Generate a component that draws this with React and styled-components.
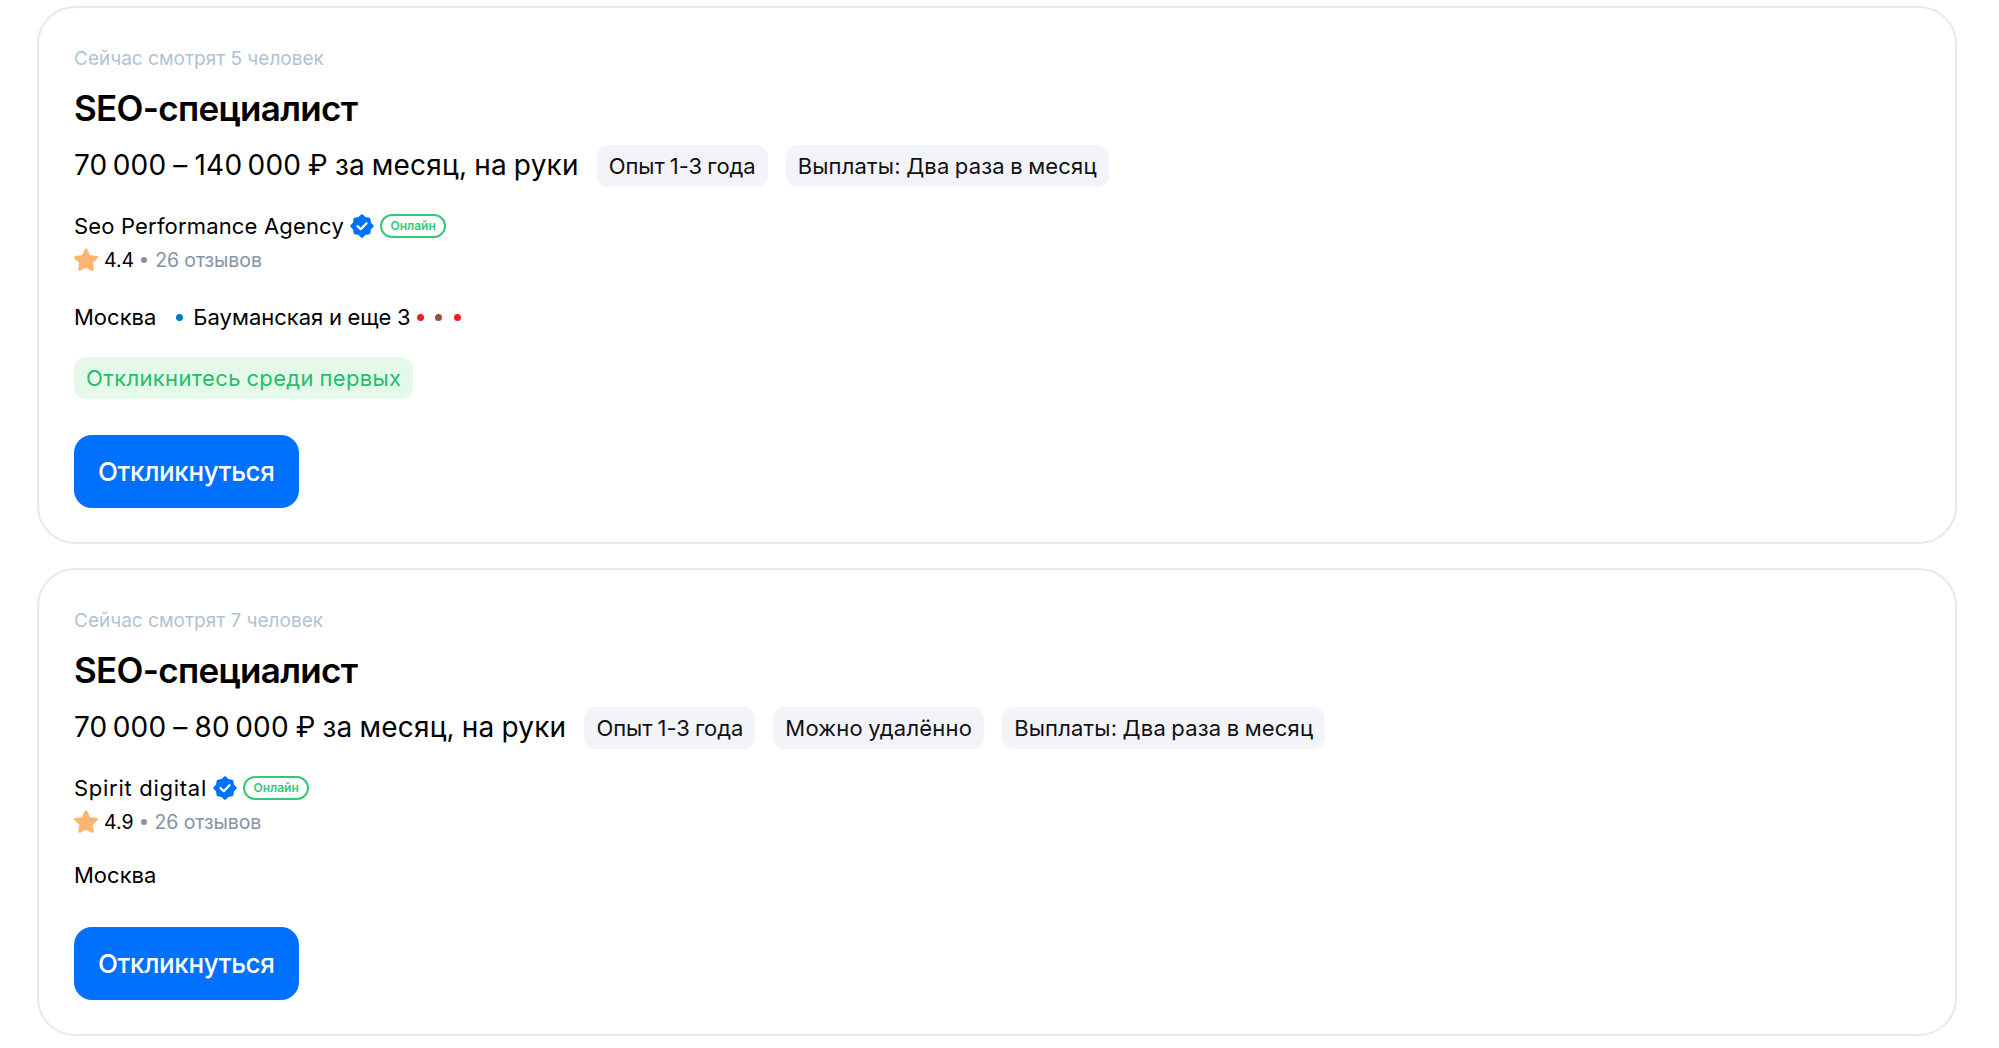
import React from 'react'
import styled, { createGlobalStyle } from 'styled-components'

const GlobalStyle = createGlobalStyle`
  * {
    box-sizing: border-box;
  }

  body {
    margin: 0;
    background: #fff;
    color: #000;
    font-family: Inter, 'Liberation Sans', sans-serif;
  }
`
const List = styled.main`
  display: flex;
  flex-direction: column;
  gap: 24px;
  padding: 6px 42px 12px 37px;
`
const Card = styled.article`
  display: flex;
  flex-direction: column;
  align-items: flex-start;
  padding: 38px 35px 34px;
  border: 2px solid #e4e9f0;
  border-radius: 38px;
`
const Viewers = styled.div`
  font-size: 19px;
  line-height: 26px;
  color: #b0c3d4;
`
const Title = styled.h2`
  margin: 13px 0 0;
  font-size: 35px;
  font-weight: 600;
  line-height: 46px;
  letter-spacing: -0.7px;
`
const SalaryRow = styled.div`
  display: flex;
  align-items: center;
  gap: 18px;
  height: 42px;
  margin-top: 14px;
`
const Salary = styled.div`
  font-size: 28px;
  line-height: 38px;
  letter-spacing: 0.2px;
  word-spacing: -1.1px;
  white-space: nowrap;
  margin-top: -3px;
`
const Chip = styled.div`
  height: 42px;
  padding: 0 12px;
  border-radius: 12px;
  background: ${({ $green }) => ($green ? '#e4f9ea' : '#f3f3fa')};
  color: ${({ $green }) => ($green ? '#22bf68' : '#111')};
  font-size: 22px;
  line-height: 42px;
  letter-spacing: ${({ $tracking }) => $tracking || 0}px;
  word-spacing: -1px;
  white-space: nowrap;
`
const CompanyRow = styled.div`
  display: flex;
  align-items: center;
  gap: 6px;
  height: 28px;
  margin-top: 25px;
`
const Company = styled.span`
  font-size: 22px;
  line-height: 28px;
  letter-spacing: ${({ $tracking }) => $tracking}px;
`
const Online = styled.span`
  height: 24px;
  padding: 0 8.5px;
  border: 2px solid #32c977;
  border-radius: 12px;
  color: #32c977;
  font-size: 12px;
  font-weight: 600;
  line-height: 20px;
`
const RatingRow = styled.div`
  display: flex;
  align-items: center;
  height: 28px;
  margin-top: 6px;
  font-size: 19.5px;
  line-height: 28px;
`
const Rating = styled.span`
  margin-left: 6px;
`
const Reviews = styled.span`
  color: #8593a5;
  letter-spacing: -0.1px;
`
const Dot = styled.i`
  width: 7px;
  height: 7px;
  border-radius: 50%;
  background: ${({ $color }) => $color};
`
const RatingDot = styled(Dot)`
  width: 6px;
  height: 6px;
  margin: 0 8px 0 7px;
`
const Location = styled.div`
  display: flex;
  align-items: center;
  height: 32px;
  margin-top: ${({ $compact }) => ($compact ? '23px' : '27px')};
  font-size: 22px;
  line-height: 32px;
`
const Metro = styled.span`
  display: flex;
  align-items: center;
  margin-left: 20px;
`
const Station = styled.span`
  margin: 0 6px 0 10px;
  word-spacing: -0.6px;
`
const Lines = styled.span`
  display: flex;
  gap: 11.5px;
`
const Hint = styled.div`
  margin-top: 24px;
`
const Button = styled.button`
  height: 73px;
  margin-top: 36px;
  padding: 0 24px;
  border: 0;
  border-radius: 18px;
  background: #0070ff;
  color: #fff;
  font-family: inherit;
  font-size: 26px;
  font-weight: 500;
  letter-spacing: -0.35px;
  cursor: pointer;
`

const VerifiedIcon = () => (
  <svg width='24' height='24' viewBox='0 0 24 24'>
    <path
      d='M12 1.500 14.900 4.200 19.100 4.900 19.800 9.100 22.500 12 19.800 14.900 19.100 19.100 14.900 19.800 12 22.500 9.100 19.800 4.900 19.100 4.200 14.900 1.500 12 4.200 9.100 4.900 4.900 9.100 4.200Z'
      fill='#0070ff'
      stroke='#0070ff'
      strokeWidth='2.5'
      strokeLinejoin='round'
    />
    <path
      d='m7.500 12.100 3.300 3.100 5.700-6'
      fill='none'
      stroke='#fff'
      strokeWidth='2.2'
      strokeLinecap='round'
      strokeLinejoin='round'
    />
  </svg>
)

const StarIcon = () => (
  <svg width='24' height='24' viewBox='0 0 24 24'>
    <path
      d='m12 2 2.900 6.400 7.600 1-5.400 4.900 1.300 7-6.400-3.200-6.400 3.200 1.300-7L1.500 9.400l7.600-1Z'
      fill='#ffb570'
      stroke='#ffb570'
      strokeWidth='3'
      strokeLinejoin='round'
    />
  </svg>
)

const experience = { text: 'Опыт 1-3 года', tracking: -0.05 }
const remote = { text: 'Можно удалённо', tracking: 0.2 }
const payments = { text: 'Выплаты: Два раза в месяц', tracking: 0.18 }

const vacancies = [
  {
    id: 1,
    viewers: 5,
    title: 'SEO-специалист',
    salary: '70\u2009000 – 140\u2009000 ₽ за месяц, на руки',
    tags: [experience, payments],
    company: { name: 'Seo Performance Agency', tracking: 0.17 },
    rating: '4.4',
    metro: 'Бауманская и еще 3',
    hint: 'Откликнитесь среди первых',
  },
  {
    id: 2,
    viewers: 7,
    title: 'SEO-специалист',
    salary: '70\u2009000 – 80\u2009000 ₽ за месяц, на руки',
    tags: [experience, remote, payments],
    company: { name: 'Spirit digital', tracking: 0.72 },
    rating: '4.9',
  },
]

const Vacancy = ({ item }) => (
  <Card>
    <Viewers>Сейчас смотрят {item.viewers} человек</Viewers>
    <Title>{item.title}</Title>
    <SalaryRow>
      <Salary>{item.salary}</Salary>
      {item.tags.map((tag) => (
        <Chip key={tag.text} $tracking={tag.tracking}>
          {tag.text}
        </Chip>
      ))}
    </SalaryRow>
    <CompanyRow>
      <Company $tracking={item.company.tracking}>{item.company.name}</Company>
      <VerifiedIcon />
      <Online>Онлайн</Online>
    </CompanyRow>
    <RatingRow>
      <StarIcon />
      <Rating>{item.rating}</Rating>
      <RatingDot $color='#8593a5' />
      <Reviews>26 отзывов</Reviews>
    </RatingRow>
    <Location $compact={!item.metro}>
      <span>Москва</span>
      {item.metro && (
        <Metro>
          <Dot $color='#0078bf' />
          <Station>{item.metro}</Station>
          <Lines>
            <Dot $color='#ef1e25' />
            <Dot $color='#945340' />
            <Dot $color='#ef1e25' />
          </Lines>
        </Metro>
      )}
    </Location>
    {item.hint && (
      <Hint>
        <Chip $green $tracking={0.36}>
          {item.hint}
        </Chip>
      </Hint>
    )}
    <Button>Откликнуться</Button>
  </Card>
)

const App = () => (
  <>
    <GlobalStyle />
    <List>
      {vacancies.map((item) => (
        <Vacancy key={item.id} item={item} />
      ))}
    </List>
  </>
)

export default App
